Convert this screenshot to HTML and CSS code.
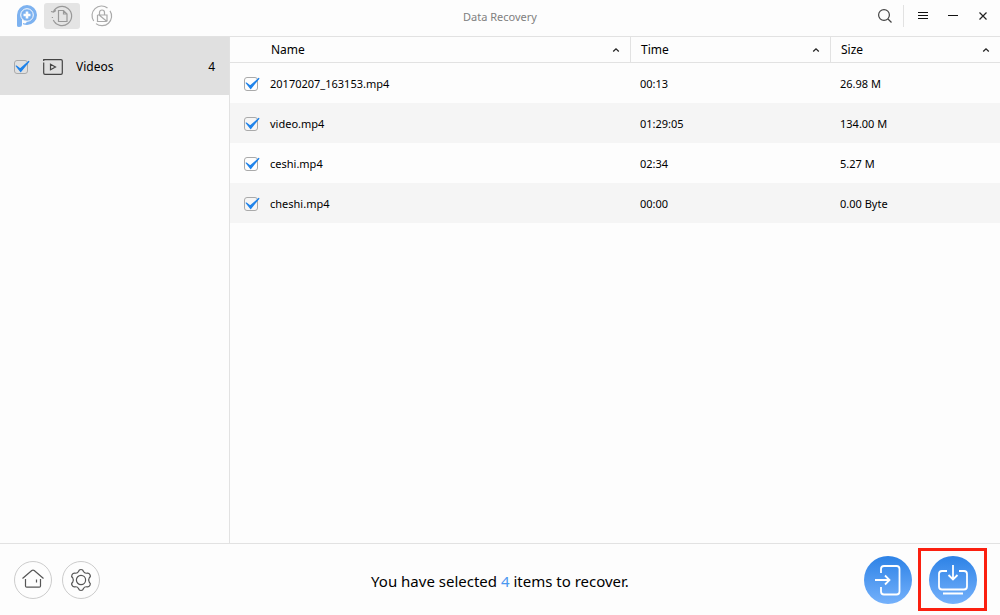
FILE: index.html
```html
<!DOCTYPE html>
<html lang="en">
<head>
<meta charset="utf-8">
<meta name="viewport" content="width=device-width, initial-scale=1">
<title>Data Recovery</title>
<link rel="stylesheet" href="styles.css">
</head>
<body class="app">
<svg class="sprite" aria-hidden="true">
  <symbol id="tick" viewBox="0 0 16 14"><path d="M2.200 6 6.200 9 14.800 1.500 6.600 11.500Z" fill="#1f83ea" stroke="#1f83ea" stroke-width="1.200" stroke-linejoin="round"/></symbol>
  <symbol id="caret" viewBox="0 0 8 6"><path d="M1.2 4.4 4 1.8 6.8 4.4" fill="none" stroke="#222" stroke-width="1.3"/></symbol>
</svg>

<header class="titlebar">
  <nav class="tools" aria-label="Modules">
    <svg class="logo" viewBox="0 0 22 24" role="img" aria-label="Logo">
      <path d="M1 21.500V11a10 10 0 1 1 10 10q-2 0-4-.8V19q4 1.500 4-3L6 13v7.500Q6 23 3 23 1 23 1 21.500Z" fill="#7db2f0"/>
      <circle cx="11" cy="11" r="6.300" fill="#7db2f0" stroke="#fdfdfd" stroke-width="1"/>
      <path d="M11 7.500v7M7.500 11h7" stroke="#fdfdfd" stroke-width="2.600"/>
    </svg>
    <button class="tool tool-active" type="button" aria-label="Data recovery">
      <svg width="24" height="24" viewBox="0 0 24 24" fill="none" stroke="#999" stroke-width="1.200">
        <path d="M3.300 8A9.600 9.600 0 1 1 3.300 16M5 18.500l1 1M2.400 13v1M1 7.500l2.500.5L6 6.500"/>
        <path d="M8.500 6.500h5L17 10v7.500H8.500ZM13.500 6.500V10H17"/>
      </svg>
    </button>
    <button class="tool" type="button" aria-label="Unlock">
      <svg width="24" height="24" viewBox="0 0 24 24" fill="none" stroke="#aaa" stroke-width="1.200">
        <path d="M3.700 17A9.600 9.600 0 0 1 17.500 4M20 6.800A9.600 9.600 0 0 1 6 19.600"/>
        <path d="M7.500 11v6.500h9M7.500 11h9.500v6.500M9.500 11V8.500a2.500 2.500 0 0 1 5 0V11M8.500 10.500l8.500 7"/>
      </svg>
    </button>
  </nav>
  <h1 class="title">Data Recovery</h1>
  <div class="window-controls">
    <button class="win search" type="button" aria-label="Search"><svg width="16" height="16" viewBox="0 0 16 16" fill="none" stroke="#444" stroke-width="1.200"><circle cx="7" cy="7" r="5.400"/><path d="m11 11 3.500 3.500"/></svg></button>
    <button class="win" type="button" aria-label="Menu"><svg width="10" height="8" viewBox="0 0 10 8" stroke="#111"><path d="M0 .5h10M0 3.500h10M0 6.500h10"/></svg></button>
    <button class="win" type="button" aria-label="Minimize"><svg width="10" height="8" viewBox="0 0 10 8" stroke="#111"><path d="M0 3.500h10"/></svg></button>
    <button class="win" type="button" aria-label="Close"><svg width="10" height="10" viewBox="0 0 10 10" stroke="#222" stroke-width="1.200"><path d="m1.500 1.500 7 7M8.500 1.500l-7 7"/></svg></button>
  </div>
</header>

<div class="content">
  <aside class="sidebar">
    <label class="category">
      <span class="check"><input type="checkbox" checked><svg><use href="#tick"/></svg></span>
      <svg class="film" width="20" height="16" viewBox="0 0 20 16" fill="none" stroke="#444" stroke-width="1.200"><path d="M.7 3.500V14a1.300 1.300 0 0 0 1.300 1.300h16a1.300 1.300 0 0 0 1.300-1.300V2A1.300 1.300 0 0 0 18 .7H.7v1.300M7.500 5.200v5.600l5-2.800Z"/></svg>
      <span>Videos</span>
      <span class="count">4</span>
    </label>
  </aside>
  <main class="files">
    <table class="table">
      <colgroup><col><col class="col-time"><col class="col-size"></colgroup>
      <thead>
        <tr>
          <th class="name-head"><button class="sort" type="button">Name<svg width="8" height="6"><use href="#caret"/></svg></button></th>
          <th><button class="sort" type="button">Time<svg width="8" height="6"><use href="#caret"/></svg></button></th>
          <th><button class="sort" type="button">Size<svg width="8" height="6"><use href="#caret"/></svg></button></th>
        </tr>
      </thead>
      <tbody>
        <tr><td><label class="file"><span class="check"><input type="checkbox" checked><svg><use href="#tick"/></svg></span>20170207_163153.mp4</label></td><td>00:13</td><td>26.98 M</td></tr>
        <tr><td><label class="file"><span class="check"><input type="checkbox" checked><svg><use href="#tick"/></svg></span>video.mp4</label></td><td>01:29:05</td><td>134.00 M</td></tr>
        <tr><td><label class="file"><span class="check"><input type="checkbox" checked><svg><use href="#tick"/></svg></span>ceshi.mp4</label></td><td>02:34</td><td>5.27 M</td></tr>
        <tr><td><label class="file"><span class="check"><input type="checkbox" checked><svg><use href="#tick"/></svg></span>cheshi.mp4</label></td><td>00:00</td><td>0.00 Byte</td></tr>
      </tbody>
    </table>
  </main>
</div>

<footer class="footer">
  <div class="footer-left">
    <button class="round" type="button" aria-label="Home"><svg width="24" height="24" viewBox="0 0 24 24" fill="none" stroke="#555" stroke-width="1.200"><path d="M1.500 10.500 10.800 2.500q1.200-.9 2.400 0L22.500 10.500M4.500 11v7a1.200 1.200 0 0 0 1.200 1.200h12.600a1.200 1.200 0 0 0 1.200-1.200V11M15.500 11.500v3"/></svg></button>
    <button class="round" type="button" aria-label="Settings"><svg width="24" height="24" viewBox="0 0 24 24" fill="none" stroke="#555" stroke-width="1.200" stroke-linejoin="round"><circle cx="12" cy="12" r="4.600"/><path d="M9.500 3.500Q10 1.500 12 1.500T14.500 3.500Q15.500 5.500 17.800 5.200 20 4.800 21 6.700T20.300 9.800Q19 12 20.300 14.200 22 15.500 21 17.300T17.800 18.800Q15.500 18.500 14.500 20.500 14 22.500 12 22.500T9.500 20.500Q8.500 18.500 6.200 18.800 4 19.200 3 17.300T3.700 14.200Q5 12 3.700 9.800 2 8.500 3 6.700T6.200 5.200Q8.500 5.500 9.500 3.500Z"/></svg></button>
  </div>
  <p class="status">You have selected <span class="status-count">4</span> items to recover.</p>
  <div class="footer-right">
    <button class="action" type="button" aria-label="Recover to device"><svg width="48" height="48" viewBox="0 0 48 48" fill="none" stroke="#fff" stroke-width="1.800"><path d="M17 17v-4q0-3 3-3h12.500q3 0 3 3v22.500q0 3-3 3H20q-3 0-3-3V31M11 24h14M21 19.500l4.500 4.500-4.500 4.500"/></svg></button>
    <span class="highlight"><button class="action" type="button" aria-label="Recover to computer"><svg width="48" height="48" viewBox="0 0 48 48" fill="none" stroke="#fff" stroke-width="1.800"><path d="M18 15h-5q-3 0-3 3v12.500q0 3 3 3h22q3 0 3-3V18q0-3-3-3h-5M24 9v14M19.500 19l4.500 4.500 4.500-4.500M14 37.500h20"/></svg></button></span>
  </div>
</footer>
</body>
</html>
```

FILE: styles.css
```css
* { box-sizing: border-box; }

.app {
  margin: 0;
  min-height: 100vh;
  display: flex;
  flex-direction: column;
  background: #fdfdfd;
  color: #000;
  font: 11px/16px "Noto Sans", "Open Sans", sans-serif;
}

button {
  padding: 0;
  border: 0;
  background: none;
  color: inherit;
  font: inherit;
}

svg { display: block; flex: none; }
.sprite { position: absolute; width: 0; height: 0; }

.titlebar {
  display: grid;
  grid-template-columns: 1fr auto 1fr;
  align-items: center;
  padding-bottom: 4px;
  height: 37px;
  border-bottom: 1px solid #e2e2e2;
}
.tools { display: flex; align-items: center; gap: 4px; padding-left: 16px; }
.logo { width: 22px; height: 24px; margin-right: 2px; }
.tool { display: grid; place-items: center; width: 36px; height: 26px; border-radius: 3px; }
.tool-active { background: #e4e4e4; }
.title { margin: 0; padding-top: 2px; color: #808080; font-size: 11px; font-weight: 400; }
.window-controls { display: flex; justify-content: flex-end; padding-right: 2px; }
.win { display: grid; place-items: center; width: 30px; height: 22px; }
.search { width: 37px; border-right: 1px solid #e2e2e2; margin-right: 4px; }

.content { flex: 1; display: flex; }
.sidebar { width: 230px; flex: none; border-right: 1px solid #e2e2e2; }
.category {
  display: flex;
  align-items: center;
  height: 58px;
  padding: 2px 14px 0;
  background: #e0e0e0;
  font-size: 12px;
}
.film { margin: 0 13px; }
.count { margin-left: auto; }

.check { display: grid; width: 16px; height: 16px; align-items: center; }
.check input {
  grid-area: 1 / 1;
  appearance: none;
  width: 14px;
  height: 14px;
  margin: 0;
  border: 1px solid #aaa;
  border-radius: 3px;
}
.check svg { grid-area: 1 / 1; width: 16px; height: 14px; pointer-events: none; visibility: hidden; }
.check input:checked + svg { visibility: visible; }

.files { flex: 1; min-width: 0; }
.table { width: 100%; table-layout: fixed; border-collapse: separate; border-spacing: 0; }
.col-time { width: 200px; }
.col-size { width: 169px; }
.table th {
  height: 26px;
  padding: 0 10px;
  border-right: 1px solid #e2e2e2;
  border-bottom: 1px solid #e2e2e2;
  font-size: 12px;
  font-weight: 400;
}
.table th:last-child { border-right: 0; }
.table .name-head { padding-left: 41px; }
.sort { display: flex; align-items: center; justify-content: space-between; width: 100%; }
.table td { height: 40px; padding: 2px 9px 0; }
.table td:first-child { padding-left: 14px; }
.table tbody tr:nth-child(even) { background: #f5f5f5; }
.file { display: flex; align-items: center; gap: 10px; }

.footer {
  display: grid;
  grid-template-columns: 1fr auto 1fr;
  align-items: center;
  height: 72px;
  border-top: 1px solid #e2e2e2;
}
.footer-left { display: flex; gap: 10px; padding-left: 14px; }
.round {
  display: grid;
  place-items: center;
  width: 38px;
  height: 38px;
  border: 1px solid #ccc;
  border-radius: 50%;
}
.status { margin: 0; padding-top: 2px; font-size: 15px; line-height: 20px; }
.status-count { color: #4a98f0; }
.footer-right { display: flex; align-items: center; justify-content: flex-end; gap: 6px; padding-right: 13px; }
.action { width: 48px; height: 48px; border-radius: 50%; background: linear-gradient(#2d82e6, #75b1fb); }
.highlight { display: grid; place-items: center; width: 69px; height: 63px; border: 3px solid #fb2010; }
```
